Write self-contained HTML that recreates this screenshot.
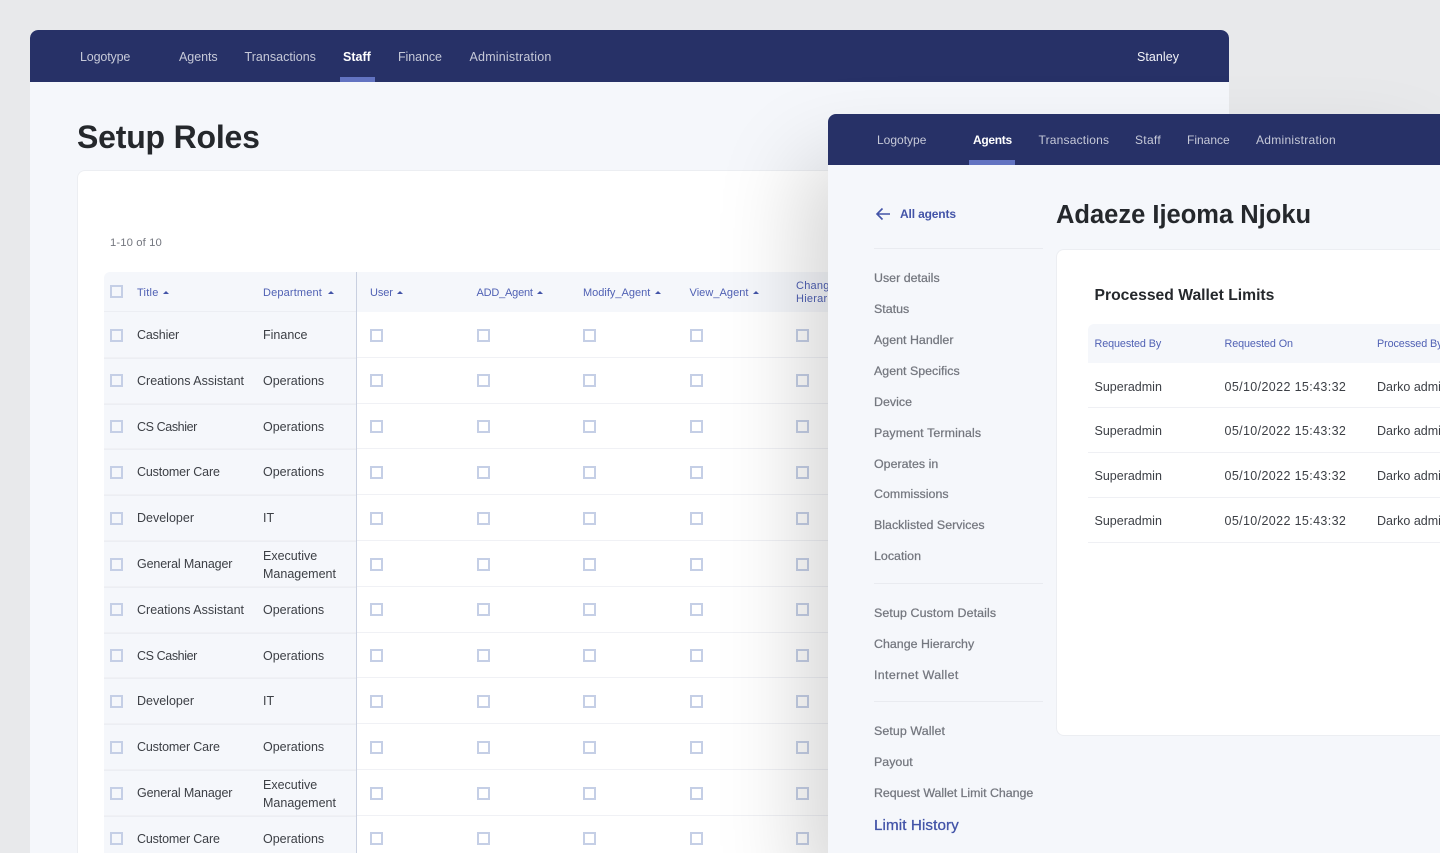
<!DOCTYPE html>
<html lang="en">
<head>
<meta charset="utf-8">
<title>Setup Roles</title>
<style>
html,body{margin:0;padding:0;width:1440px;height:853px;overflow:hidden;background:#e8e9eb;font-family:"Liberation Sans",sans-serif;}
*{box-sizing:border-box}
#root{position:relative;width:1440px;height:853px;overflow:hidden;background:#e8e9eb;filter:blur(.3px)}
.nav span,.side span,.h span,.r span,.t span,#th span{position:absolute;white-space:nowrap}
#page{position:absolute;left:30px;top:30px;width:1199px;height:823px;background:#f5f7fb;border-radius:8px 8px 0 0;overflow:hidden}
.nav{position:absolute;left:0;top:0;height:52px;width:100%;background:#273167;border-radius:8px 8px 0 0;color:#c6c9d8;font-size:12.5px;letter-spacing:.2px;line-height:54px}
.nav span{top:0}
.nav b{position:absolute;top:47px;height:5px;background:#6273c1}
.nav .on{color:#fff;font-weight:bold;letter-spacing:0}
#h1{position:absolute;left:47px;top:87px;font-size:32px;line-height:40px;font-weight:bold;color:#25282c;letter-spacing:-.2px}
#card{position:absolute;left:47px;top:140px;width:1100px;height:683px;background:#fff;border:1px solid #eceef2;border-bottom:0;border-radius:8px 8px 0 0}
#count{position:absolute;left:80px;top:206px;font-size:11.3px;line-height:14px;color:#74777f;letter-spacing:.1px}
#hdr{position:absolute;left:74px;top:242px;width:724px;height:40px;background:#f5f7fb;border-radius:6px 0 0 0;overflow:hidden}
#hdr:after{content:"";position:absolute;left:0;top:39px;width:252px;height:1px;background:#eceef3}
.h span{top:0;line-height:42px;font-size:11px;color:#5061b4;letter-spacing:.25px}
.h em{position:absolute;top:18.5px;width:0;height:0;border-left:3px solid transparent;border-right:3px solid transparent;border-bottom:3px solid #4354a8}
#left{position:absolute;left:74px;top:282px;width:252px;height:541px;background:#f5f7fb}
#vr{position:absolute;left:326px;top:242px;width:1px;height:581px;background:#c9d0e0}
.r{position:absolute;left:74px;width:724px;height:45.8px;border-bottom:1px solid #f0f1f5;font-size:12.5px;color:#3c3f45;line-height:47px}
.r:before{content:"";position:absolute;left:0;top:0;width:252px;height:45.8px;border-bottom:1px solid #eceef3}
.r.last{height:37.2px;border-bottom:0}
.r.last:before{height:37.2px;border-bottom:0}
.r span{left:33px;top:0}
.r span+span{left:159px}
.r span.two{line-height:18.5px;top:5.5px;white-space:normal;width:90px}
.r i,.h i{position:absolute;width:13px;height:13px;border:2px solid #c5cfe6;top:16.5px;background:transparent}
.r i:nth-of-type(1){left:6px}
.r i:nth-of-type(2){left:266px}
.r i:nth-of-type(3){left:372.5px}
.r i:nth-of-type(4){left:479px}
.r i:nth-of-type(5){left:585.5px}
.r i:nth-of-type(6){left:692px}
.cs{letter-spacing:-.4px}.cc{letter-spacing:-.15px}.gm{letter-spacing:-.13px}
#panel{position:absolute;left:828px;top:114px;width:612px;height:739px;background:#f5f7fb;border-radius:8px 0 0 0;box-shadow:-25px 45px 85px rgba(0,0,0,.17)}
#panel .nav{height:51px;line-height:53px;font-size:12px;letter-spacing:0;border-radius:8px 0 0 0}
#panel .nav b{top:46px;height:5px}
#panel .nav .on{letter-spacing:-.3px}
.side span{left:46px;font-size:12.4px;line-height:16px;color:#74777f;font-weight:normal;letter-spacing:.02px;-webkit-text-stroke:.25px #74777f}
.dv{position:absolute;left:46px;width:169px;height:1px;background:#e9ebf0}
#back{position:absolute;left:72px;top:92px;font-size:12px;line-height:16px;font-weight:bold;color:#4354a8;letter-spacing:-.15px}
#name{position:absolute;left:228px;top:84px;font-size:25.5px;line-height:34px;font-weight:bold;color:#25282c}
#c2{position:absolute;left:228px;top:135px;width:384px;height:487px;background:#fff;border:1px solid #eceef2;border-right:0;border-radius:8px 0 0 8px}
#pw{position:absolute;left:266.5px;top:172px;font-size:15.7px;line-height:20px;font-weight:bold;color:#25282c}
#th{position:absolute;left:260px;top:210px;width:352px;height:39px;background:#f5f7fb;border-radius:6px 0 0 0;overflow:hidden}
.t{position:absolute;left:260px;width:352px;height:44.8px;border-bottom:1px solid #eff0f4;font-size:12.5px;color:#3c3f45;line-height:47px;overflow:hidden}
.t span,#th span{top:0}
#th span{line-height:41px;font-size:10.8px;color:#5061b4;letter-spacing:-.1px}
.t span:nth-child(1),#th span:nth-child(1){left:6.5px}
.t span:nth-child(2),#th span:nth-child(2){left:136.5px}
.t span:nth-child(2){letter-spacing:.37px}
.t span:nth-child(3),#th span:nth-child(3){left:289px}
</style>
</head>
<body>
<div id="root">
<div id="page">
  <div class="nav">
    <span style="left:50px;letter-spacing:-.15px">Logotype</span><span style="left:149px;letter-spacing:-.05px">Agents</span><span style="left:214.5px;letter-spacing:.03px">Transactions</span><span class="on" style="left:313px">Staff</span><span style="left:368px;letter-spacing:-.08px">Finance</span><span style="left:439.5px">Administration</span><span style="left:1107px;color:#f1f2f7;letter-spacing:.05px">Stanley</span>
    <b style="left:309.5px;width:35px"></b>
  </div>
  <div id="h1">Setup Roles</div>
  <div id="card"></div>
  <div id="count">1-10 of 10</div>
  <div id="left"></div>
  <div id="hdr" class="h">
    <i style="left:6px;top:13px"></i>
    <span style="left:33px">Title</span><em style="left:59px"></em>
    <span style="left:159px;letter-spacing:.15px">Department</span><em style="left:224px"></em>
    <span style="left:266px;letter-spacing:-.1px">User</span><em style="left:293px"></em>
    <span style="left:372.5px;letter-spacing:-.2px">ADD_Agent</span><em style="left:433px"></em>
    <span style="left:479px;letter-spacing:0">Modify_Agent</span><em style="left:551px"></em>
    <span style="left:585.5px;letter-spacing:.05px">View_Agent</span><em style="left:649px"></em>
    <span style="left:692px;line-height:13px;top:8px">Change<br>Hierarchy</span>
  </div>
  <div class="r" style="top:282px"><span class="cc">Cashier</span><span>Finance</span><i></i><i></i><i></i><i></i><i></i><i></i></div>
  <div class="r" style="top:327.8px"><span>Creations Assistant</span><span>Operations</span><i></i><i></i><i></i><i></i><i></i><i></i></div>
  <div class="r" style="top:373.6px"><span class="cs">CS Cashier</span><span>Operations</span><i></i><i></i><i></i><i></i><i></i><i></i></div>
  <div class="r" style="top:419.4px"><span class="cc">Customer Care</span><span>Operations</span><i></i><i></i><i></i><i></i><i></i><i></i></div>
  <div class="r" style="top:465.2px"><span>Developer</span><span>IT</span><i></i><i></i><i></i><i></i><i></i><i></i></div>
  <div class="r" style="top:511px"><span class="gm">General Manager</span><span class="two">Executive Management</span><i></i><i></i><i></i><i></i><i></i><i></i></div>
  <div class="r" style="top:556.8px"><span>Creations Assistant</span><span>Operations</span><i></i><i></i><i></i><i></i><i></i><i></i></div>
  <div class="r" style="top:602.6px"><span class="cs">CS Cashier</span><span>Operations</span><i></i><i></i><i></i><i></i><i></i><i></i></div>
  <div class="r" style="top:648.4px"><span>Developer</span><span>IT</span><i></i><i></i><i></i><i></i><i></i><i></i></div>
  <div class="r" style="top:694.2px"><span class="cc">Customer Care</span><span>Operations</span><i></i><i></i><i></i><i></i><i></i><i></i></div>
  <div class="r" style="top:740px"><span class="gm">General Manager</span><span class="two">Executive Management</span><i></i><i></i><i></i><i></i><i></i><i></i></div>
  <div class="r last" style="top:785.8px"><span class="cc">Customer Care</span><span>Operations</span><i></i><i></i><i></i><i></i><i></i><i></i></div>
  <div id="vr"></div>
</div>

<div id="panel">
  <div class="nav">
    <span style="left:49px">Logotype</span><span class="on" style="left:145px">Agents</span><span style="left:210.5px;letter-spacing:.2px">Transactions</span><span style="left:307px;letter-spacing:.3px">Staff</span><span style="left:359px">Finance</span><span style="left:428px;letter-spacing:.28px">Administration</span>
    <b style="left:141px;width:46px"></b>
  </div>
  <svg style="position:absolute;left:47px;top:92px" width="16" height="16" viewBox="0 0 16 16" fill="none" stroke="#4354a8" stroke-width="1.6"><path d="M15 8H2.5M7.5 2.5 2 8l5.5 5.5"/></svg>
  <div id="back">All agents</div>
  <div class="dv" style="top:134px"></div>
  <div class="side">
    <span style="top:156px">User details</span>
    <span style="top:187px">Status</span>
    <span style="top:218px">Agent Handler</span>
    <span style="top:249px">Agent Specifics</span>
    <span style="top:280px">Device</span>
    <span style="top:311px;letter-spacing:.12px">Payment Terminals</span>
    <span style="top:341.5px">Operates in</span>
    <span style="top:372px">Commissions</span>
    <span style="top:403px">Blacklisted Services</span>
    <span style="top:434px">Location</span>
    <span style="top:491px;letter-spacing:.12px">Setup Custom Details</span>
    <span style="top:522px">Change Hierarchy</span>
    <span style="top:553px;letter-spacing:.35px">Internet Wallet</span>
    <span style="top:609px;letter-spacing:.1px">Setup Wallet</span>
    <span style="top:640px">Payout</span>
    <span style="top:671px;letter-spacing:-.03px">Request Wallet Limit Change</span>
    <span style="top:703px;font-size:15.2px;line-height:18px;color:#4354a8;letter-spacing:.1px;-webkit-text-stroke:.3px #4354a8">Limit History</span>
  </div>
  <div class="dv" style="top:469px"></div>
  <div class="dv" style="top:587px"></div>
  <div id="name">Adaeze Ijeoma Njoku</div>
  <div id="c2"></div>
  <div id="pw">Processed Wallet Limits</div>
  <div id="th"><span>Requested By</span><span>Requested On</span><span>Processed By</span></div>
  <div class="t" style="top:249.5px"><span>Superadmin</span><span>05/10/2022 15:43:32</span><span>Darko admin</span></div>
  <div class="t" style="top:294.3px"><span>Superadmin</span><span>05/10/2022 15:43:32</span><span>Darko admin</span></div>
  <div class="t" style="top:339.1px"><span>Superadmin</span><span>05/10/2022 15:43:32</span><span>Darko admin</span></div>
  <div class="t" style="top:383.9px"><span>Superadmin</span><span>05/10/2022 15:43:32</span><span>Darko admin</span></div>
</div>
</div>
</body>
</html>
